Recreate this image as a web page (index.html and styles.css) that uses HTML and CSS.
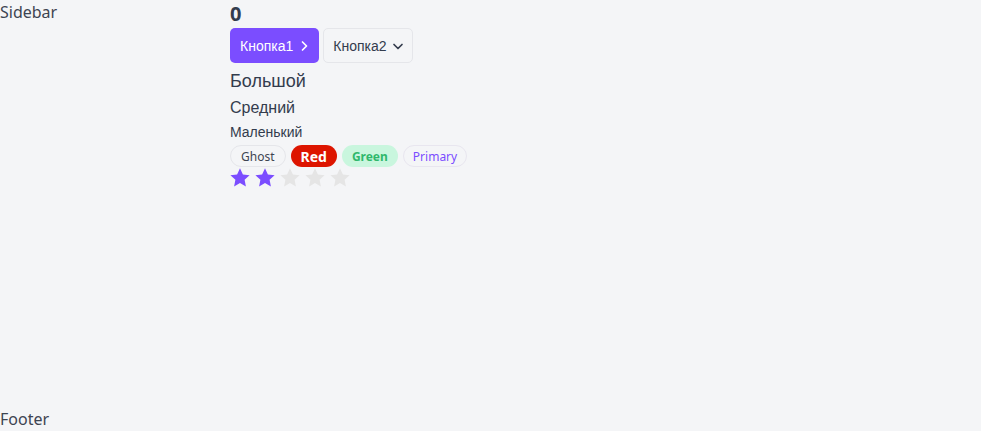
FILE: index.html
```html
<!DOCTYPE html>
<html>
<head>
<meta charset="utf-8">
<link rel="stylesheet" href="styles.css">
</head>
<body>
<div class="layout">
  <div class="top">
    <aside class="sidebar">Sidebar</aside>
    <main class="main">
      <div class="counter">0</div>
      <div class="buttons">
        <button class="btn btn-primary">Кнопка1
          <svg class="ico" width="12" height="12" viewBox="0 0 12 12"><path d="M4.5 2 L8.5 6 L4.5 10" fill="none" stroke="currentColor" stroke-width="1.7" stroke-linecap="round" stroke-linejoin="round"/></svg>
        </button>
        <button class="btn btn-default">Кнопка2
          <svg class="ico" width="12" height="12" viewBox="0 0 12 12"><path d="M2 4.5 L6 8.5 L10 4.5" fill="none" stroke="currentColor" stroke-width="1.7" stroke-linecap="round" stroke-linejoin="round"/></svg>
        </button>
      </div>
      <div class="t-lg">Большой</div>
      <div class="t-md">Средний</div>
      <div class="t-sm">Маленький</div>
      <div class="badges">
        <span class="badge badge-ghost">Ghost</span>
        <span class="badge badge-red">Red</span>
        <span class="badge badge-green">Green</span>
        <span class="badge badge-primary">Primary</span>
      </div>
      <div class="stars">
        <svg class="star on" viewBox="0 0 20 20"><path d="M10 0.3 L12.9 6.4 L19.6 7.2 L14.6 11.8 L15.9 18.4 L10 15.1 L4.1 18.4 L5.4 11.8 L0.4 7.2 L7.1 6.4 Z"/></svg>
        <svg class="star on" viewBox="0 0 20 20"><path d="M10 0.3 L12.9 6.4 L19.6 7.2 L14.6 11.8 L15.9 18.4 L10 15.1 L4.1 18.4 L5.4 11.8 L0.4 7.2 L7.1 6.4 Z"/></svg>
        <svg class="star" viewBox="0 0 20 20"><path d="M10 0.3 L12.9 6.4 L19.6 7.2 L14.6 11.8 L15.9 18.4 L10 15.1 L4.1 18.4 L5.4 11.8 L0.4 7.2 L7.1 6.4 Z"/></svg>
        <svg class="star" viewBox="0 0 20 20"><path d="M10 0.3 L12.9 6.4 L19.6 7.2 L14.6 11.8 L15.9 18.4 L10 15.1 L4.1 18.4 L5.4 11.8 L0.4 7.2 L7.1 6.4 Z"/></svg>
        <svg class="star" viewBox="0 0 20 20"><path d="M10 0.3 L12.9 6.4 L19.6 7.2 L14.6 11.8 L15.9 18.4 L10 15.1 L4.1 18.4 L5.4 11.8 L0.4 7.2 L7.1 6.4 Z"/></svg>
      </div>
    </main>
  </div>
  <footer class="footer">Footer</footer>
</div>
</body>
</html>
```
FILE: styles.css
```css
html, body {
  margin: 0;
  padding: 0;
  height: 100%;
  background: #f4f5f7;
  color: #333c4d;
  font-family: "Noto Sans", sans-serif;
  font-size: 16px;
}
.layout {
  height: 100%;
  display: flex;
  flex-direction: column;
}
.top {
  flex: 1;
  display: flex;
  min-height: 0;
}
.sidebar {
  width: 230px;
  line-height: 24px;
  color: #3d4451;
}
.main {
  display: flex;
  flex-direction: column;
  align-items: flex-start;
}
.counter {
  font-weight: 700;
  font-size: 20px;
  line-height: 28px;
}
.buttons {
  display: flex;
  gap: 4px;
}
.btn {
  height: 35px;
  display: flex;
  align-items: center;
  gap: 5px;
  padding: 0 8px 0 9px;
  border-radius: 5px;
  font-family: "Liberation Sans", Arial, sans-serif;
  font-size: 14px;
  border: 1px solid transparent;
  cursor: pointer;
  box-sizing: border-box;
}
.ico {
  flex-shrink: 0;
  width: 12px;
  height: 12px;
}
.btn-primary {
  background: #7b4dff;
  color: #fff;
}
.btn-default {
  background: #f4f5f7;
  color: #333c4d;
  border-color: #e5e6ea;
}
.t-lg {
  font-family: "Liberation Sans", Arial, sans-serif;
  font-size: 18px;
  line-height: 28px;
  margin-top: 4px;
}
.t-md {
  font-family: "Liberation Sans", Arial, sans-serif;
  font-size: 16px;
  line-height: 24px;
  margin-top: 1px;
}
.t-sm {
  font-family: "Liberation Sans", Arial, sans-serif;
  font-size: 14px;
  line-height: 22px;
  margin-top: 1px;
}
.badges {
  display: flex;
  gap: 5px;
  margin-top: 2px;
}
.badge {
  height: 22px;
  display: inline-flex;
  align-items: center;
  padding: 0 10px;
  border-radius: 11px;
  font-size: 12px;
  border: 1px solid transparent;
  box-sizing: border-box;
}
.badge-ghost {
  border-color: #e5e6ea;
  color: #3d4451;
}
.badge-red {
  background: #dd1500;
  color: #fff;
  font-weight: 700;
  font-size: 14px;
  padding: 0 9px;
}
.badge-green {
  background: #c9f6de;
  color: #2fb86c;
  font-weight: 700;
  padding: 0 9px;
}
.badge-primary {
  border-color: #e8e6ef;
  color: #7b4dff;
  padding: 0 9px;
}
.stars {
  display: flex;
  gap: 5px;
  margin-top: 1px;
}
.star {
  width: 20px;
  height: 20px;
  fill: #e5e5e5;
}
.star.on {
  fill: #7b4dff;
}
.footer {
  line-height: 24px;
  height: 24px;
  color: #3d4451;
}
```
